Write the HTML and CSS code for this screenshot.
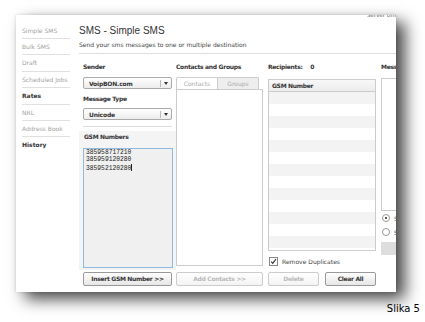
FILE: index.html
```html
<!DOCTYPE html>
<html lang="en">
<head>
    <meta charset="UTF-8">
    <title>SMS - Simple SMS</title>
    <link rel="stylesheet" href="styles.css">
</head>
<body>
    <div class="page">
        <div class="window">
            <div class="sidebar">
                <div class="nav-item">Simple SMS</div>
                <div class="nav-item">Bulk SMS</div>
                <div class="nav-item">Draft</div>
                <div class="nav-item">Scheduled Jobs</div>
                <div class="nav-item active">Rates</div>
                <div class="nav-item">NRL</div>
                <div class="nav-item">Address Book</div>
                <div class="nav-item active">History</div>
            </div>
            <div class="content">
                <div class="header">
                    <div class="header-text">
                        <div class="title">SMS - Simple SMS</div>
                        <div class="subtitle">Send your sms messages to one or multiple destination</div>
                    </div>
                    <div class="server-time">Server time: 12:40</div>
                </div>
                <div class="columns">
                    <div class="col col-sender">
                        <div class="sender-top">
                            <div class="label">Sender</div>
                            <div class="select"><span>VoipBON.com</span><span class="arrow"></span></div>
                            <div class="label label-type">Message Type</div>
                            <div class="select select-type"><span>Unicode</span><span class="arrow"></span></div>
                        </div>
                        <div class="divider"></div>
                        <div class="gsm-panel">
                            <div class="label">GSM Numbers</div>
                            <div class="numbers">385958717210<br>385959120280<br>385952120280<span class="caret"></span></div>
                        </div>
                        <div class="btn btn-insert">Insert GSM Number &gt;&gt;</div>
                    </div>
                    <div class="col col-contacts">
                        <div class="label">Contacts and Groups</div>
                        <div class="tabs">
                            <div class="tab active">Contacts</div>
                            <div class="tab">Groups</div>
                        </div>
                        <div class="tab-panel"></div>
                        <div class="btn disabled">Add Contacts &gt;&gt;</div>
                    </div>
                    <div class="col col-recipients">
                        <div class="label">Recipients: <span class="count">0</span></div>
                        <div class="grid">
                            <div class="grid-head">GSM Number</div>
                            <div class="grid-row"></div>
                            <div class="grid-row"></div>
                            <div class="grid-row"></div>
                            <div class="grid-row"></div>
                            <div class="grid-row"></div>
                            <div class="grid-row"></div>
                            <div class="grid-row"></div>
                            <div class="grid-row"></div>
                            <div class="grid-row"></div>
                            <div class="grid-row"></div>
                            <div class="grid-row"></div>
                            <div class="grid-row"></div>
                            <div class="grid-row"></div>
                            <div class="grid-row"></div>
                        </div>
                        <div class="check-row">
                            <span class="checkbox">
                                <svg width="7" height="7" viewBox="0 0 7 7"><path d="M1.2 3.6 L2.8 5.4 L6 1" fill="none" stroke="#333" stroke-width="1.2"/></svg>
                            </span>
                            Remove Duplicates
                        </div>
                        <div class="btn-row">
                            <div class="btn disabled">Delete</div>
                            <div class="btn">Clear All</div>
                        </div>
                    </div>
                    <div class="col col-message">
                        <div class="label">Message</div>
                        <div class="message-box"></div>
                        <div class="radio-row"><span class="radio checked"></span>Send now</div>
                        <div class="radio-row"><span class="radio"></span>Schedule</div>
                        <div class="gray-bar"></div>
                    </div>
                </div>
            </div>
        </div>
        <div class="caption">Slika 5</div>
    </div>
</body>
</html>
```

FILE: styles.css
```css
body {
    margin: 0;
    background-color: #fff;
    font-family: "DejaVu Sans", Verdana, sans-serif;
    color: #333;
}
.page {
    width: 425px;
    height: 322px;
    overflow: hidden;
}
.window {
    margin: 15px 0 0 16px;
    width: 380px;
    height: 277px;
    display: flex;
    background-color: #fff;
    overflow: hidden;
    box-shadow: 9px 7px 15px rgba(0, 0, 0, 0.72), 0 0 3px rgba(0, 0, 0, 0.15);
}

/* left menu */
.sidebar {
    width: 48px;
    flex-shrink: 0;
    margin: 0 9px 0 6px;
    padding-top: 7.6px;
}
.nav-item {
    height: 15.4px;
    line-height: 16.8px;
    border-bottom: 1px solid #e0e0e0;
    font-size: 6px;
    color: #a2a2a2;
    white-space: nowrap;
}
.nav-item.active {
    font-weight: bold;
    color: #333;
}
.nav-item:last-child {
    border-bottom: none;
}

.content {
    flex: 1;
    min-width: 0;
    display: flex;
    flex-direction: column;
}
.header {
    display: flex;
    justify-content: space-between;
    padding: 9px 0 4px;
    border-bottom: 1px solid #ddd;
}
.title {
    font-family: "Liberation Sans", Arial, sans-serif;
    font-size: 10px;
    line-height: 13px;
    color: #333;
}
.subtitle {
    margin-top: 4px;
    font-size: 6px;
    line-height: 8px;
    color: #444;
}
.server-time {
    align-self: flex-start;
    margin-top: -12px;
    width: 29px;
    overflow: hidden;
    white-space: nowrap;
    font-size: 5.5px;
    line-height: 6px;
    color: #555;
}

.columns {
    flex: 1;
    min-height: 0;
    display: flex;
    padding: 9px 0 6px;
}
.col {
    display: flex;
    flex-direction: column;
    flex-shrink: 0;
    min-height: 0;
}
.label {
    font-size: 6px;
    line-height: 8px;
    font-weight: bold;
    letter-spacing: -0.3px;
    color: #333;
    white-space: nowrap;
}

/* sender column */
.col-sender {
    width: 97px;
}
.sender-top {
    padding: 0 4px;
}
.select {
    margin-top: 6px;
    height: 10px;
    display: flex;
    justify-content: space-between;
    align-items: center;
    border: 1px solid #aaa;
    border-radius: 2px;
    background: linear-gradient(#fff, #ececec);
    font-size: 6px;
    font-weight: bold;
    letter-spacing: -0.2px;
    padding-left: 5px;
}
.select-type {
    margin-top: 5px;
}
.label-type {
    margin-top: 6px;
}
.arrow {
    width: 10px;
    height: 7px;
    border-left: 1px solid #bbb;
    position: relative;
}
.arrow::after {
    content: "";
    position: absolute;
    left: 3px;
    top: 2px;
    border-left: 2px solid transparent;
    border-right: 2px solid transparent;
    border-top: 3px solid #333;
}
.divider {
    margin: 6px 4px 0;
    border-top: 1px solid #ddd;
}
.gsm-panel {
    flex: 1;
    min-height: 0;
    margin-top: 4px;
    padding: 2px 3px 2px 4px;
    background-color: #f4f4f4;
    display: flex;
    flex-direction: column;
}
.gsm-panel .label {
    padding-left: 1px;
}
.numbers {
    flex: 1;
    min-height: 0;
    margin-top: 7px;
    border: 1px solid #8fbbe0;
    background-color: #f0f0f0;
    padding: 0 2px;
    font-family: "Liberation Mono", "DejaVu Sans Mono", monospace;
    font-size: 6.3px;
    line-height: 7.3px;
    color: #222;
}
.caret {
    display: inline-block;
    width: 1px;
    height: 7px;
    vertical-align: -1px;
    background-color: #222;
}
.btn {
    flex-shrink: 0;
    height: 12px;
    line-height: 12px;
    border: 1px solid #999;
    border-radius: 2px;
    background: linear-gradient(#fff, #e6e6e6);
    text-align: center;
    font-size: 6px;
    font-weight: bold;
    letter-spacing: -0.3px;
    color: #333;
    white-space: nowrap;
}
.btn.disabled {
    border-color: #ccc;
    background: linear-gradient(#fff, #f3f3f3);
    color: #bbb;
}
.btn-insert {
    margin: 2px 4px 0;
}

/* contacts column */
.col-contacts {
    width: 87px;
    margin-right: 5px;
}
.tabs {
    display: flex;
    margin-top: 6px;
    height: 12px;
}
.tab {
    width: 40px;
    border: 1px solid #ccc;
    border-bottom: none;
    border-radius: 2px 2px 0 0;
    background-color: #eee;
    font-size: 6px;
    line-height: 12px;
    text-align: center;
    color: #aaa;
}
.tab.active {
    background-color: #fff;
    margin-right: -1px;
}
.tab-panel {
    flex: 1;
    min-height: 0;
    border: 1px solid #ccc;
}
.col-contacts .btn {
    margin-top: 6px;
}

/* recipients column */
.col-recipients {
    width: 108px;
    margin-right: 5px;
}
.count {
    margin-left: 6px;
}
.grid {
    flex: 1;
    min-height: 0;
    margin-top: 8px;
    border: 1px solid #ccc;
    overflow: hidden;
}
.grid-head {
    height: 11px;
    line-height: 11px;
    padding-left: 3px;
    border-bottom: 1px solid #ccc;
    background: linear-gradient(#f8f8f8, #ececec);
    font-size: 6px;
    font-weight: bold;
    letter-spacing: -0.3px;
}
.grid-row {
    height: 12px;
}
.grid-row:nth-child(even) {
    background-color: #f3f3f3;
}
.check-row {
    flex-shrink: 0;
    height: 21px;
    display: flex;
    align-items: center;
    gap: 4px;
    padding-left: 1px;
    font-size: 6px;
    color: #444;
}
.checkbox {
    width: 7px;
    height: 7px;
    border: 1px solid #888;
    background-color: #fff;
    display: flex;
}
.btn-row {
    display: flex;
    justify-content: space-between;
}
.btn-row .btn {
    width: 49px;
}

/* message column (cut off on the right) */
.col-message {
    width: 60px;
}
.message-box {
    margin-top: 7px;
    height: 131px;
    border: 1px solid #ccc;
}
.radio-row {
    display: flex;
    align-items: center;
    gap: 4px;
    height: 14px;
    padding-left: 1px;
    font-size: 6px;
    color: #444;
}
.radio-row:first-of-type {
    margin-top: 2px;
}
.radio {
    width: 6px;
    height: 6px;
    border: 1px solid #999;
    border-radius: 50%;
    position: relative;
}
.radio.checked::after {
    content: "";
    position: absolute;
    left: 2px;
    top: 2px;
    width: 2px;
    height: 2px;
    border-radius: 50%;
    background-color: #222;
}
.gray-bar {
    margin-top: 3px;
    height: 13px;
    background-color: #ddd;
}

.caption {
    margin-top: 11px;
    padding-right: 5px;
    text-align: right;
    font-size: 10px;
    line-height: 12px;
    color: #000;
}
```
